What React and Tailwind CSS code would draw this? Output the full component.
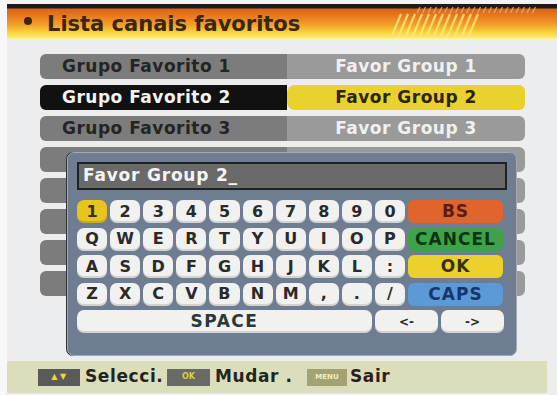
import React from 'react';

const rows = [1, 2, 3, 4, 5, 6, 7, 8];

const keyRows = [
  ['1', '2', '3', '4', '5', '6', '7', '8', '9', '0'],
  ['Q', 'W', 'E', 'R', 'T', 'Y', 'U', 'I', 'O', 'P'],
  ['A', 'S', 'D', 'F', 'G', 'H', 'J', 'K', 'L', ':'],
  ['Z', 'X', 'C', 'V', 'B', 'N', 'M', ',', '.', '/'],
];

const sideKeys = [
  { label: 'BS', cls: 'bg-[#e0642c] text-[#5a1e10]' },
  { label: 'CANCEL', cls: 'bg-[#3ea348] text-[#0c3412]' },
  { label: 'OK', cls: 'bg-[#ecd02c] text-[#3a3008]' },
  { label: 'CAPS', cls: 'bg-[#5b9ad6] text-[#17356e]' },
];

const Key = ({ children, className = '' }) => (
  <div
    className={`h-full flex items-center justify-center rounded-[7px] font-bold leading-none shadow-[inset_0_-2px_0_rgba(0,0,0,0.12)] ${className}`}
  >
    {children}
  </div>
);

const HeaderStripes = () => (
  <svg className="absolute left-[370px] top-0" width="180" height="40" viewBox="0 0 180 40">
    {Array.from({ length: 12 }).map((_, i) => (
      <line key={i} x1={14 + i * 7} y1="34" x2={24 + i * 7} y2="10" stroke="#fce77a" strokeWidth="2.2" opacity="0.85" />
    ))}
    {Array.from({ length: 22 }).map((_, i) => (
      <line key={'t' + i} x1={40 + i * 5.5} y1="9" x2={43 + i * 5.5} y2="3" stroke="#f0b070" strokeWidth="1.4" opacity="0.8" />
    ))}
  </svg>
);

export default function App() {
  return (
    <div
      className="relative w-[557px] h-[395px] overflow-hidden bg-[#f7f7f7] pl-[7px]"
      style={{ fontFamily: '"DejaVu Sans", "Liberation Sans", sans-serif' }}
    >
      <div className="relative h-full bg-[#ebedee] flex flex-col">
        {/* header */}
        <div className="h-[4px] bg-[#f4f4f4]" />
        <div className="relative h-[36px] bg-[linear-gradient(to_bottom,#1c1a22_0px,#1c1a22_4px,#d8641a_5px,#ea7e1e_13px,#f2a02a_21px,#f8d23a_28px,#fbe868_33px,#fff6b8_36px)]">
          <HeaderStripes />
          <div className="absolute left-[17px] top-[13px] w-[8px] h-[8px] rounded-full bg-[#3a2414]" />
          <div className="absolute left-[40px] top-[10px] text-[21px] font-bold text-[#3b2612] leading-none">
            Lista canais favoritos
          </div>
        </div>

        {/* list */}
        <div className="flex flex-col gap-[6px] pt-[14px] pl-[33px] w-[518px]">
          {rows.map((n) => {
            const sel = n === 2;
            return (
              <div key={n} className="flex h-[25px] rounded-[6px] overflow-hidden">
                <div
                  className={`w-[247px] flex items-center pl-[22px] font-bold text-[17px] tracking-[0.5px] ${
                    sel ? 'bg-[#111111] text-[#f4f4f4]' : 'bg-[#7c7c7c] text-[#242424]'
                  }`}
                >
                  {n <= 3 ? `Grupo Favorito ${n}` : ''}
                </div>
                <div
                  className={`flex-1 flex items-center justify-center font-bold text-[17px] tracking-[0.5px] ${
                    sel ? 'bg-[#ead22e] text-[#2a2408] rounded-l-[8px]' : 'bg-[#9a9a9a] text-[#f0f0f0]'
                  }`}
                >
                  {n <= 3 ? `Favor Group ${n}` : ''}
                </div>
              </div>
            );
          })}
        </div>

        {/* keyboard dialog */}
        <div className="absolute left-[60px] top-[152px] w-[450px] h-[204px] rounded-[7px] bg-[#6e7d91] border border-[#a0abb8] shadow-[-1px_0_0_#333] p-[9px] flex flex-col">
          <div className="h-[28px] bg-[#696969] border-2 border-[#222] flex items-center pl-[4px] text-[17px] tracking-[0.8px] font-bold text-[#f4f4f4]">
            Favor Group 2_
          </div>
          <div className="mt-[10px] flex flex-col gap-[4.5px]">
            {keyRows.map((row, ri) => (
              <div key={ri} className="flex h-[23px] gap-[3px]">
                <div className="w-[328px] grid grid-cols-10 gap-[3px]">
                  {row.map((k, ki) => (
                    <Key
                      key={k}
                      className={`text-[16px] ${ri === 0 && ki === 0 ? 'bg-[#e8c41e] text-[#3a2e06]' : 'bg-[#f1f1ef] text-[#2a2a2a]'}`}
                    >
                      {k}
                    </Key>
                  ))}
                </div>
                <div
                  className={`w-[95px] h-full flex items-center justify-center rounded-[6px] font-bold text-[17px] tracking-[1px] leading-none ${sideKeys[ri].cls}`}
                >
                  {sideKeys[ri].label}
                </div>
              </div>
            ))}
            <div className="flex h-[23px] gap-[3px]">
              <Key className="w-[295px] bg-[#f1f1ef] text-[#2a3838] text-[17px] tracking-[1.5px]">SPACE</Key>
              <Key className="w-[63px] bg-[#f1f1ef] text-[#2a2a2a] text-[12px]">&lt;-</Key>
              <Key className="w-[63px] bg-[#f1f1ef] text-[#2a2a2a] text-[12px]">-&gt;</Key>
            </div>
          </div>
        </div>

        {/* footer */}
        <div className="mt-auto mb-[2px] w-[540px] h-[32px] bg-[#dcdebb] flex items-center pl-[31px] font-bold text-[17px] tracking-[0.6px] text-[#1f261f]">
          <div className="w-[42px] h-[17px] bg-[#5a5a58] flex items-center justify-center gap-[2px] text-[#e8d83a] text-[8px] leading-none">
            <span>▲</span>
            <span>▼</span>
          </div>
          <span className="ml-[5px] w-[82px]">Selecci.</span>
          <div className="w-[43px] h-[17px] bg-[#6a6a66] flex items-center justify-center text-[8px] text-[#d8d040] leading-none tracking-normal">
            OK
          </div>
          <span className="ml-[5px] w-[92px]">Mudar .</span>
          <div className="w-[40px] h-[17px] bg-[#a3a272] flex items-center justify-center text-[7px] text-[#f0eec0] leading-none tracking-normal">
            MENU
          </div>
          <span className="ml-[3px] text-[#2e1c1c]">Sair</span>
        </div>
      </div>
    </div>
  );
}
